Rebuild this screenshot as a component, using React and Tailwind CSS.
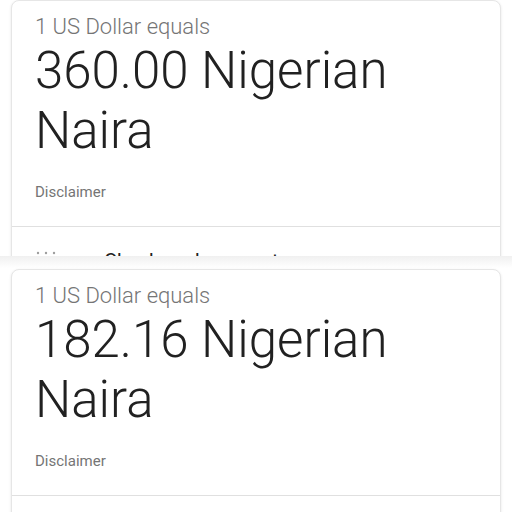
import React from 'react';

const RateCard = ({ amount, footer }) => (
  <div className="mx-[11px] rounded-t-lg bg-white border border-[#e6e6e6] shadow-[0_1px_3px_rgba(0,0,0,0.10)]">
    <div className="px-[23px] pt-[12px]">
      <p className="text-[22px] leading-[28px] font-light text-[#757575]">1 US Dollar equals</p>
      <p className="text-[51px] leading-[60px] font-light text-[#212121]">
        {amount} Nigerian Naira
      </p>
      <p className="text-[15px] leading-[20px] text-[#757575] mt-[21px]">Disclaimer</p>
    </div>
    <div className="mt-[24px] border-t border-[#e0e0e0] h-[40px] px-[23px] pt-[22px] flex items-start gap-[45px]">
      {footer && (
        <>
          <svg width="24" height="24" viewBox="0 0 24 24" className="shrink-0 mt-[2px] text-[#9e9e9e]" fill="currentColor">
            <circle cx="3" cy="2" r="1.2" />
            <circle cx="11" cy="2" r="1.2" />
            <circle cx="19" cy="2" r="1.2" />
            <rect x="2" y="6" width="20" height="2" />
          </svg>
          <p className="text-[20px] leading-[24px] text-[#212121]">Check exchange rates</p>
        </>
      )}
    </div>
  </div>
);

export default function App() {
  return (
    <div className="w-[512px] h-[512px] bg-white overflow-hidden" style={{ fontFamily: 'Roboto, "Noto Sans", sans-serif' }}>
      <div className="h-[256px] overflow-hidden">
        <RateCard amount="360.00" footer />
      </div>
      <div className="h-[256px] overflow-hidden bg-gradient-to-b from-[#f0f0f0] to-white to-[12px] pt-[13px]">
        <RateCard amount="182.16" />
      </div>
    </div>
  );
}
